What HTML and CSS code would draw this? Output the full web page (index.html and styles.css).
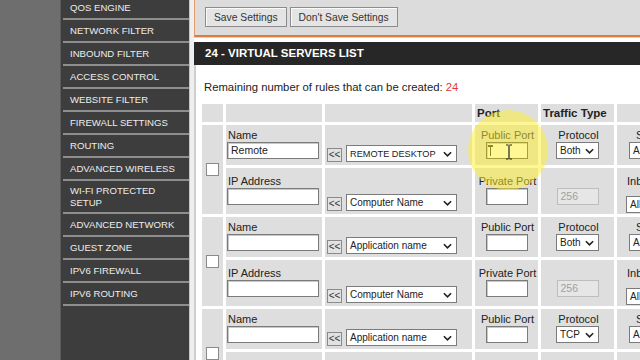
FILE: index.html
```html
<!DOCTYPE html>
<html lang="en">
<head>
    <meta charset="UTF-8">
    <title>Virtual Servers</title>
    <link rel="stylesheet" href="styles.css">
</head>
<body>
    <div class="page">
        <div class="backdrop"></div>

        <nav class="menu">
            <a class="menu-item">QOS ENGINE</a>
            <a class="menu-item">NETWORK FILTER</a>
            <a class="menu-item">INBOUND FILTER</a>
            <a class="menu-item">ACCESS CONTROL</a>
            <a class="menu-item">WEBSITE FILTER</a>
            <a class="menu-item">FIREWALL SETTINGS</a>
            <a class="menu-item">ROUTING</a>
            <a class="menu-item">ADVANCED WIRELESS</a>
            <a class="menu-item tall">WI-FI PROTECTED<br>SETUP</a>
            <a class="menu-item">ADVANCED NETWORK</a>
            <a class="menu-item">GUEST ZONE</a>
            <a class="menu-item">IPV6 FIREWALL</a>
            <a class="menu-item">IPV6 ROUTING</a>
        </nav>

        <div class="gutter"></div>

        <main class="main">
            <div class="toolbar">
                <button class="btn">Save Settings</button>
                <button class="btn">Don't Save Settings</button>
            </div>

            <h2 class="section-title">24 - VIRTUAL SERVERS LIST</h2>

            <div class="section-body">
                <p class="remaining">Remaining number of rules that can be created: <span class="count">24</span></p>

                <table class="rules">
                    <tr class="head">
                        <td class="c-check"></td>
                        <td class="c-name"></td>
                        <td class="c-app"></td>
                        <td class="c-port">Port</td>
                        <td class="c-proto">Traffic Type</td>
                        <td class="c-sched"></td>
                    </tr>

                    <!-- rule 1 -->
                    <tr class="sub1">
                        <td class="c-check" rowspan="2"><span class="checkbox"></span></td>
                        <td class="c-name"><div class="label">Name</div><div class="field">Remote</div></td>
                        <td class="c-app"><div class="app"><span class="pick">&lt;&lt;</span><span class="select wide caps">REMOTE DESKTOP<svg viewBox="0 0 10 6"><path d="M1 1l4 4 4-4"/></svg></span></div></td>
                        <td class="c-port"><div class="label">Public Port</div><div class="field port active"><span class="caret"></span></div></td>
                        <td class="c-proto"><div class="label">Protocol</div><div class="select small">Both<svg viewBox="0 0 10 6"><path d="M1 1l4 4 4-4"/></svg></div></td>
                        <td class="c-sched"><div class="label center">Schedule</div><div class="select sched">Always</div></td>
                    </tr>
                    <tr class="sub2">
                        <td class="c-name"><div class="label">IP Address</div><div class="field"></div></td>
                        <td class="c-app"><div class="app"><span class="pick">&lt;&lt;</span><span class="select wide">Computer Name<svg viewBox="0 0 10 6"><path d="M1 1l4 4 4-4"/></svg></span></div></td>
                        <td class="c-port"><div class="label">Private Port</div><div class="field port"></div></td>
                        <td class="c-proto"><div class="label">&nbsp;</div><div class="field port off">256</div></td>
                        <td class="c-sched"><div class="label">Inbound Filter</div><div class="select inbound">Allow All</div></td>
                    </tr>

                    <!-- rule 2 -->
                    <tr class="sub1">
                        <td class="c-check" rowspan="2"><span class="checkbox"></span></td>
                        <td class="c-name"><div class="label">Name</div><div class="field"></div></td>
                        <td class="c-app"><div class="app"><span class="pick">&lt;&lt;</span><span class="select wide">Application name<svg viewBox="0 0 10 6"><path d="M1 1l4 4 4-4"/></svg></span></div></td>
                        <td class="c-port"><div class="label">Public Port</div><div class="field port"></div></td>
                        <td class="c-proto"><div class="label">Protocol</div><div class="select small">Both<svg viewBox="0 0 10 6"><path d="M1 1l4 4 4-4"/></svg></div></td>
                        <td class="c-sched"><div class="label center">Schedule</div><div class="select sched">Always</div></td>
                    </tr>
                    <tr class="sub2">
                        <td class="c-name"><div class="label">IP Address</div><div class="field"></div></td>
                        <td class="c-app"><div class="app"><span class="pick">&lt;&lt;</span><span class="select wide">Computer Name<svg viewBox="0 0 10 6"><path d="M1 1l4 4 4-4"/></svg></span></div></td>
                        <td class="c-port"><div class="label">Private Port</div><div class="field port"></div></td>
                        <td class="c-proto"><div class="label">&nbsp;</div><div class="field port off">256</div></td>
                        <td class="c-sched"><div class="label">Inbound Filter</div><div class="select inbound">Allow All</div></td>
                    </tr>

                    <!-- rule 3 -->
                    <tr class="sub1">
                        <td class="c-check" rowspan="2"><span class="checkbox"></span></td>
                        <td class="c-name"><div class="label">Name</div><div class="field"></div></td>
                        <td class="c-app"><div class="app"><span class="pick">&lt;&lt;</span><span class="select wide">Application name<svg viewBox="0 0 10 6"><path d="M1 1l4 4 4-4"/></svg></span></div></td>
                        <td class="c-port"><div class="label">Public Port</div><div class="field port"></div></td>
                        <td class="c-proto"><div class="label">Protocol</div><div class="select small">TCP<svg viewBox="0 0 10 6"><path d="M1 1l4 4 4-4"/></svg></div></td>
                        <td class="c-sched"><div class="label center">Schedule</div><div class="select sched">Always</div></td>
                    </tr>
                    <tr class="sub2">
                        <td class="c-name"><div class="label">IP Address</div><div class="field"></div></td>
                        <td class="c-app"><div class="app"><span class="pick">&lt;&lt;</span><span class="select wide">Computer Name<svg viewBox="0 0 10 6"><path d="M1 1l4 4 4-4"/></svg></span></div></td>
                        <td class="c-port"><div class="label">Private Port</div><div class="field port"></div></td>
                        <td class="c-proto"><div class="label">&nbsp;</div><div class="field port off">256</div></td>
                        <td class="c-sched"><div class="label">Inbound Filter</div><div class="select inbound">Allow All</div></td>
                    </tr>
                </table>
            </div>
        </main>

        <!-- video highlight over the focused field -->
        <div class="spotlight"></div>
        <svg class="ibeam" viewBox="0 0 8 16"><path d="M1 1h2.5M4.5 1H7M4 1.5v13M1 15h2.5M4.5 15H7"/></svg>
    </div>
</body>
</html>
```

FILE: styles.css
```css
html, body {
    margin: 0;
    padding: 0;
}
body {
    font-family: "Liberation Sans", Arial, sans-serif;
    background-color: white;
    overflow: hidden;
}
.page {
    position: relative;
    display: flex;
    width: 640px;
    height: 360px;
    overflow: hidden;
}
.backdrop {
    width: 60px;
    flex: none;
    background-color: #6e6e6e;
    border-right: 1px solid #5a5a5a;
}
.menu {
    width: 128px;
    flex: none;
    background-color: #3d3d3d;
    margin-top: -3px;
}
.menu-item {
    display: block;
    height: 21px;
    line-height: 21px;
    padding-left: 7px;
    margin-left: 2px;
    border-bottom: 2px solid #8e8e8e;
    color: #ededed;
    font-size: 9.6px;
    white-space: nowrap;
}
.menu-item.tall {
    height: 27px;
    line-height: 12px;
    padding-top: 4px;
}
.gutter {
    width: 4px;
    flex: none;
    background-color: #efefef;
    border-left: 1px solid #c4c4c4;
}
.main {
    flex: 1;
    min-width: 0;
}
.toolbar {
    height: 37px;
    display: flex;
    gap: 3px;
    align-items: flex-start;
    padding: 7px 0 0 10px;
    box-sizing: border-box;
    background-color: #dcdcdc;
    border-left: 1px solid #e59a6a;
    border-bottom: 2px solid #e27a3c;
    box-shadow: 0 1px 0 #f6c9a8;
}
.btn {
    height: 20px;
    padding: 0 8px;
    font-family: inherit;
    font-size: 10.3px;
    color: #333;
    background-color: #e4e4e4;
    border: 1px solid #8c8c8c;
    box-shadow: inset 1px 1px 0 #fafafa;
}
.section-title {
    margin: 5px 0 0;
    height: 23px;
    line-height: 23px;
    padding-left: 11px;
    background-color: #272727;
    color: white;
    font-size: 11.5px;
    font-weight: bold;
}
.section-body {
    border-left: 2px solid #cfcfcf;
    padding-left: 3px;
    height: 300px;
}
.remaining {
    margin: 0 0 0 5px;
    padding-top: 15px;
    line-height: 14px;
    font-size: 11.3px;
    color: #222;
    white-space: nowrap;
}
.count {
    color: #e03a3a;
}
.rules {
    table-layout: fixed;
    width: 503px;
    border-collapse: separate;
    border-spacing: 3px;
    margin-top: 7px;
    font-size: 11px;
    color: #222;
}
.rules td {
    background-color: #dedede;
    padding: 0;
    vertical-align: top;
    white-space: nowrap;
    overflow: hidden;
}
.head {
    height: 18px;
}
.head td {
    vertical-align: middle;
    font-weight: bold;
    font-size: 11.5px;
    text-indent: 2px;
}
.sub1 {
    height: 40px;
}
.sub1 td {
    padding-top: 3px;
}
.sub2 {
    height: 46px;
}
.sub2 td {
    padding-top: 6px;
}
.c-check { width: 21px; text-align: center; }
.c-name { width: 96px; }
.c-app { width: 147px; }
.c-port { width: 63px; }
.c-proto { width: 73px; }
.c-sched { width: 82px; }
.sub1 .c-port, .sub2 .c-port, .sub1 .c-proto, .sub2 .c-proto {
    text-align: center;
}
.rules td.c-check {
    vertical-align: middle;
    padding: 0;
}
.rules td.c-app {
    vertical-align: bottom;
    padding: 0 0 3px;
}
.app {
    display: flex;
    align-items: flex-end;
    gap: 4px;
    padding-left: 2px;
}
.label {
    line-height: 14px;
    padding-left: 2px;
}
.label.center {
    text-align: center;
}
.checkbox {
    display: inline-block;
    width: 11px;
    height: 11px;
    background-color: white;
    border: 1px solid #8a8a8a;
    vertical-align: middle;
}
.field {
    box-sizing: border-box;
    width: 92px;
    height: 17px;
    line-height: 15px;
    margin-left: 1px;
    padding-left: 3px;
    font-size: 10.5px;
    text-align: left;
    background-color: white;
    border: 1px solid #7b7b7b;
    box-shadow: inset 1px 1px 0 #c8c8c8;
}
.field.port {
    width: 42px;
    margin: 0 auto;
}
.field.off {
    color: #a0a0a0;
    background-color: #e6e6e6;
    border-color: #bdbdbd;
    box-shadow: none;
}
.field.active {
    border-color: #4a4a4a;
    position: relative;
}
.caret {
    position: absolute;
    left: 3px;
    top: 2px;
    width: 1px;
    height: 11px;
    background-color: #222;
}
.caret::before {
    content: "";
    position: absolute;
    left: -2px;
    top: 0;
    width: 5px;
    height: 2px;
    background-color: #222;
}
.pick {
    display: block;
    box-sizing: border-box;
    width: 15px;
    height: 14px;
    line-height: 12px;
    font-size: 10px;
    text-align: center;
    color: #333;
    background-color: #e2e2e2;
    border: 1px solid #8a8a8a;
}
.select {
    display: flex;
    align-items: center;
    justify-content: space-between;
    box-sizing: border-box;
    height: 17px;
    padding: 0 4px 0 3px;
    font-size: 10px;
    color: #222;
    background-color: white;
    border: 1px solid #7b7b7b;
    text-align: left;
    overflow: hidden;
}
.select svg {
    flex: none;
    width: 9px;
    height: 6px;
    fill: none;
    stroke: #222;
    stroke-width: 1.8;
}
.select.wide {
    width: 111px;
    font-size: 10px;
}
.select.caps {
    font-size: 9.2px;
}
.select.small {
    width: 43px;
    margin: 0 auto;
}
.select.sched {
    width: 56px;
    margin-left: 12px;
}
.sub2 .c-sched {
    padding-left: 8px;
}
.select.inbound {
    width: 62px;
    margin-top: 8px;
    margin-left: 1px;
}
.spotlight {
    position: absolute;
    left: 468px;
    top: 110px;
    width: 80px;
    height: 80px;
    border-radius: 50%;
    background-color: rgba(255, 240, 40, 0.5);
}
.ibeam {
    position: absolute;
    left: 505px;
    top: 144px;
    width: 8px;
    height: 16px;
    fill: none;
    stroke: #222;
    stroke-width: 1.2;
}
```
